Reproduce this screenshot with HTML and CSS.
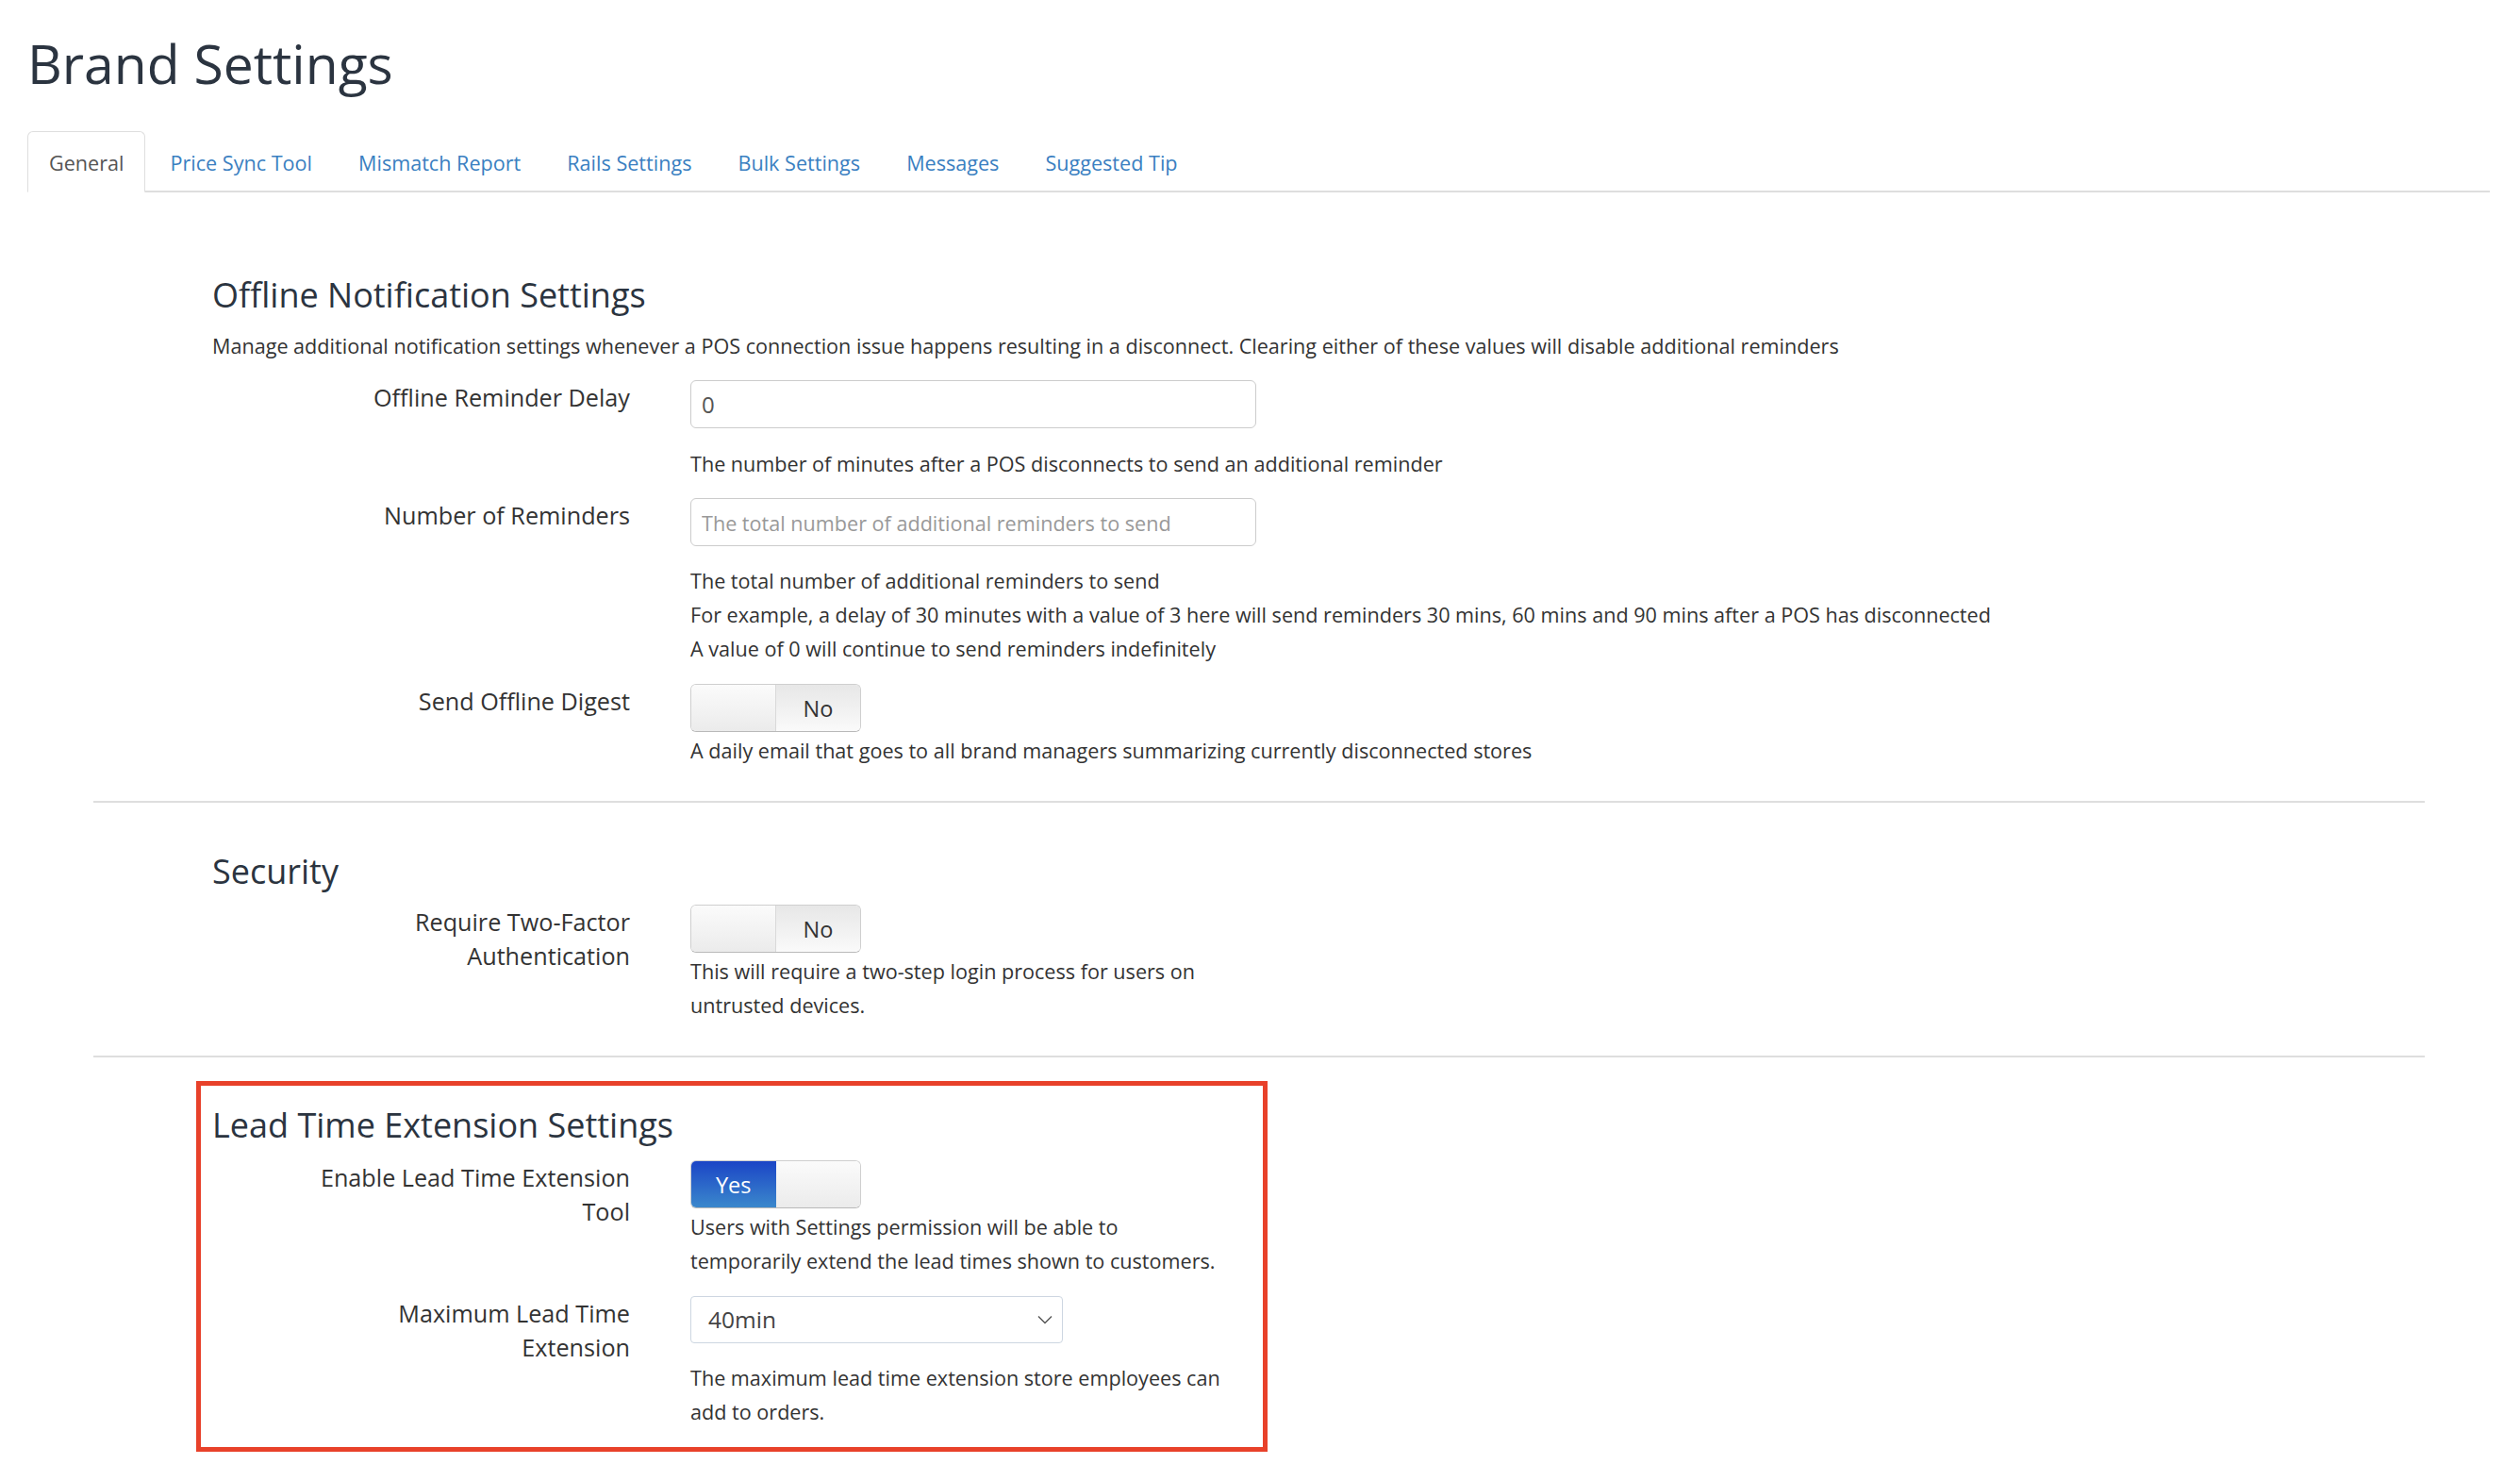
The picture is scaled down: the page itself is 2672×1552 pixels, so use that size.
FILE: index.html
```html
<!DOCTYPE html>
<html lang="en">
<head>
    <meta charset="UTF-8">
    <meta name="viewport" content="width=device-width, initial-scale=1.0">
    <title>Brand Settings</title>
    <link rel="stylesheet" href="styles.css">
</head>
<body>
    <div class="page">
        <h1 class="page-title">Brand Settings</h1>

        <ul class="tabs">
            <li><a class="tab active" href="#">General</a></li>
            <li><a class="tab" href="#">Price Sync Tool</a></li>
            <li><a class="tab" href="#">Mismatch Report</a></li>
            <li><a class="tab" href="#">Rails Settings</a></li>
            <li><a class="tab" href="#">Bulk Settings</a></li>
            <li><a class="tab" href="#">Messages</a></li>
            <li><a class="tab" href="#">Suggested Tip</a></li>
        </ul>

        <div class="tab-content">
            <!-- offline notifications -->
            <div class="section">
                <h3 class="section-title">Offline Notification Settings</h3>
                <p class="section-desc">Manage additional notification settings whenever a POS connection issue happens resulting in a disconnect. Clearing either of these values will disable additional reminders</p>

                <div class="form-row first">
                    <label class="form-label">Offline Reminder Delay</label>
                    <div class="form-control">
                        <input type="text" class="text-input" value="0">
                        <div class="help after-input">The number of minutes after a POS disconnects to send an additional reminder</div>
                    </div>
                </div>

                <div class="form-row">
                    <label class="form-label">Number of Reminders</label>
                    <div class="form-control">
                        <input type="text" class="text-input" placeholder="The total number of additional reminders to send">
                        <div class="help after-input short">The total number of additional reminders to send<br>For example, a delay of 30 minutes with a value of 3 here will send reminders 30 mins, 60 mins and 90 mins after a POS has disconnected<br>A value of 0 will continue to send reminders indefinitely</div>
                    </div>
                </div>

                <div class="form-row spaced">
                    <label class="form-label">Send Offline Digest</label>
                    <div class="form-control">
                        <div class="switch">
                            <span class="switch-blank"></span>
                            <span class="switch-off">No</span>
                        </div>
                        <div class="help">A daily email that goes to all brand managers summarizing currently disconnected stores</div>
                    </div>
                </div>
            </div>

            <!-- security -->
            <div class="section">
                <h3 class="section-title">Security</h3>
                <div class="form-row tight">
                    <label class="form-label">Require Two-Factor Authentication</label>
                    <div class="form-control">
                        <div class="switch">
                            <span class="switch-blank"></span>
                            <span class="switch-off">No</span>
                        </div>
                        <div class="help narrow">This will require a two-step login process for users on untrusted devices.</div>
                    </div>
                </div>
            </div>

            <!-- lead time -->
            <div class="section-wrap">
                <div class="highlight">
                    <h3 class="section-title">Lead Time Extension Settings</h3>
                    <div class="form-row after-title">
                        <label class="form-label">Enable Lead Time Extension Tool</label>
                        <div class="form-control">
                            <div class="switch">
                                <span class="switch-on">Yes</span>
                                <span class="switch-blank"></span>
                            </div>
                            <div class="help narrow">Users with Settings permission will be able to temporarily extend the lead times shown to customers.</div>
                        </div>
                    </div>
                    <div class="form-row next">
                        <label class="form-label">Maximum Lead Time Extension</label>
                        <div class="form-control">
                            <div class="select-box">
                                <span>40min</span>
                                <svg class="chevron" width="16" height="10" viewBox="0 0 16 10"><path d="M1 1.5 L8 8.5 L15 1.5" fill="none" stroke="#555" stroke-width="1.4"/></svg>
                            </div>
                            <div class="help after-select narrow">The maximum lead time extension store employees can add to orders.</div>
                        </div>
                    </div>
                </div>
            </div>
        </div>
    </div>
</body>
</html>
```

FILE: styles.css
```css
body {
    margin: 0;
    background-color: #fff;
    font-family: "Open Sans", "Liberation Sans", sans-serif;
    font-size: 21.6px;
    line-height: 36px;
    color: #333;
}
.page {
    padding: 0 32px 0 29px;
}
.page-title {
    margin: 36px 0 0;
    font-size: 57px;
    line-height: 62px;
    font-weight: 400;
    color: #2b3440;
}
.tabs {
    display: flex;
    list-style: none;
    margin: 41px 0 0;
    padding: 0;
    border-bottom: 2px solid #dedede;
}
.tab {
    display: block;
    margin: 0 3px -2px 0;
    padding: 17px 22px 15px;
    line-height: 31px;
    border: 1px solid transparent;
    border-radius: 6px 6px 0 0;
    color: #3a7fc1;
    text-decoration: none;
}
.tab.active {
    color: #555;
    background-color: #fff;
    border-color: #dedede #dedede transparent;
}
.tab-content {
    margin: 0 69px 0 70px;
    padding-top: 38px;
}
.section {
    padding: 51px 0 35px 126px;
}
.section + .section {
    border-top: 2px solid #dedede;
    padding-top: 53px;
}
.section-wrap {
    border-top: 2px solid #dedede;
    padding: 25px 0 0 109px;
}
.highlight {
    width: 1136px;
    box-sizing: border-box;
    border: 5px solid #e8412a;
    padding: 22px 0 19px 12px;
}
.section-title {
    margin: 0;
    font-size: 36px;
    line-height: 40px;
    font-weight: 400;
    color: #2b3440;
}
.section-desc {
    margin: 16px 0 0;
}
.form-row {
    display: grid;
    grid-template-columns: 443px 1fr;
    column-gap: 64px;
    margin-top: 18px;
}
.form-row.spaced {
    margin-top: 19px;
}
.form-row.tight {
    margin-top: 15px;
}
.form-row.after-title {
    margin-top: 17px;
}
.form-row.next {
    margin-top: 19px;
}
.form-label {
    padding-left: 93px;
    text-align: right;
    font-size: 25.2px;
    line-height: 36px;
    color: #333;
}
.text-input {
    display: block;
    width: 600px;
    height: 51px;
    box-sizing: border-box;
    padding: 0 11px;
    border: 1px solid #ccc;
    border-radius: 6px;
    font-family: inherit;
    font-size: 24px;
    color: #555;
    outline: none;
}
.text-input::placeholder {
    font-size: 21.6px;
    color: #999;
}
.help {
    color: #333;
}
.switch + .help {
    margin-top: 2px;
}
.help.after-input {
    margin-top: 20px;
}
.help.after-input.short {
    margin-top: 19px;
}
.help.after-select {
    margin-top: 19px;
}
.help.narrow {
    max-width: 568px;
}
.switch {
    display: flex;
    width: 181px;
    height: 51px;
    box-sizing: border-box;
    border: 1px solid #cfcfcf;
    border-bottom-color: #b9b9b9;
    border-radius: 6px;
    overflow: hidden;
}
.switch span {
    flex: 1;
    display: flex;
    align-items: center;
    justify-content: center;
    font-size: 23.5px;
}
.switch-blank {
    background: linear-gradient(#fbfbfb, #ebebeb);
}
.switch-off {
    border-left: 1px solid #d9d9d9;
    background: linear-gradient(#e7e7e7, #fafafa);
    color: #333;
}
.switch-on {
    background: linear-gradient(#1b45c6, #3b88cc);
    color: #fff;
}
.select-box {
    display: flex;
    align-items: center;
    width: 395px;
    height: 50px;
    box-sizing: border-box;
    padding: 0 10px 0 18px;
    border: 1px solid #cdd6e1;
    border-radius: 4px;
    font-size: 24.5px;
    color: #444;
}
.chevron {
    margin-left: auto;
}
```
